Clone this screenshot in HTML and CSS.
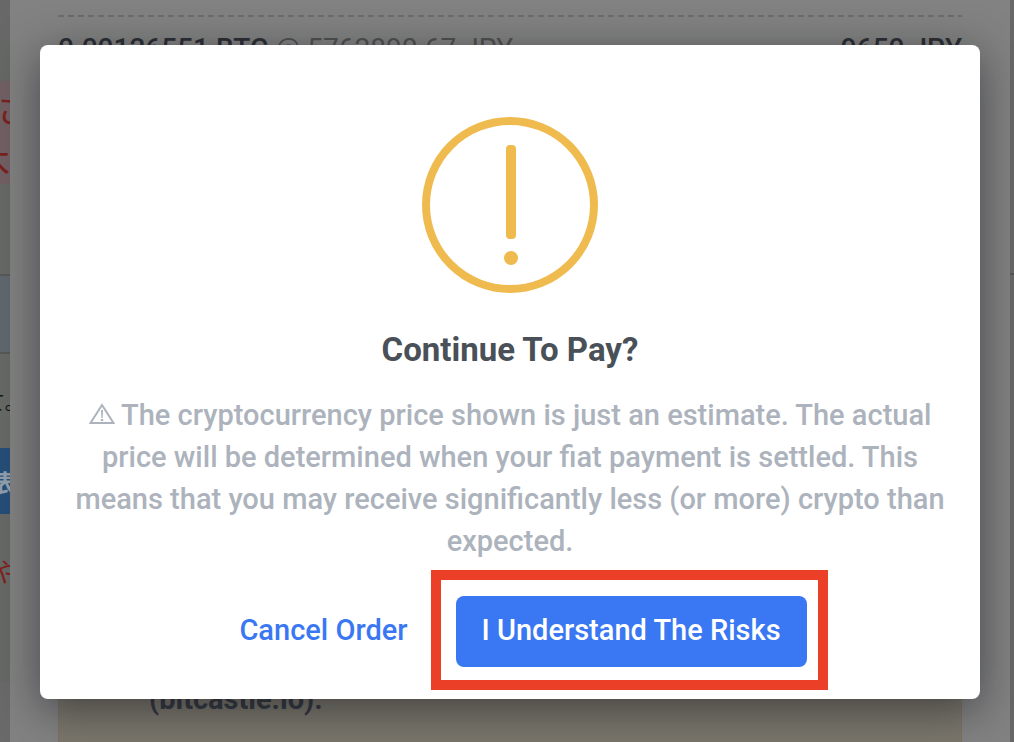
FILE: index.html
```
<!DOCTYPE html>
<html lang="en">
<head>
<meta charset="utf-8">
<meta name="viewport" content="width=device-width, initial-scale=1">
<title>Continue To Pay?</title>
<link rel="stylesheet" href="styles.css">
</head>
<body>
<div class="page" aria-hidden="true">
  <div class="rail" lang="ja">
    <div class="band band-top"></div>
    <div class="band band-gap"></div>
    <div class="band band-pink"><span class="from-start">さ</span><span>木</span></div>
    <div class="band band-plain"></div>
    <div class="band band-cool"></div>
    <div class="band band-note"><span>て。</span></div>
    <div class="band band-blue"><span>表</span></div>
    <div class="band band-red"><span>や</span></div>
    <div class="band band-end"></div>
  </div>
  <div class="sheet">
    <div class="order">
      <div class="amount"><b>0.00126551 BTC</b> <span>@ 5762890.67 JPY</span></div>
      <div class="total">9650 JPY</div>
    </div>
    <div class="notice">(bitcastle.io).</div>
  </div>
  <div class="rail rail-right"><div class="rule"></div></div>
</div>
<div class="overlay">
  <section class="modal" role="dialog" aria-modal="true" aria-labelledby="title" aria-describedby="message">
    <svg class="warning" viewBox="0 0 176 176" aria-hidden="true">
      <circle cx="88" cy="88" r="84" fill="none" stroke="#f0bb4e" stroke-width="8"/>
      <rect x="84" y="28" width="10" height="94" rx="4" fill="#f0bb4e"/>
      <circle cx="89" cy="141" r="7" fill="#f0bb4e"/>
    </svg>
    <h1 id="title" class="title">Continue To Pay?</h1>
    <p id="message" class="message"><svg class="mark" viewBox="0 0 26 22" aria-hidden="true"><path d="M13 2 24.500 20H1.500Z" fill="none" stroke="currentColor" stroke-width="2"/><path d="M12 7h2l-.4 8h-1.2Z" fill="currentColor"/><circle cx="13" cy="17" r="1.3" fill="currentColor"/></svg> The cryptocurrency price shown is just an estimate. The actual price will be determined when your fiat payment is settled. This means that you may receive significantly less (or more) crypto than expected.</p>
    <div class="actions">
      <button class="button" type="button">Cancel Order</button>
      <div class="highlight"><button class="button primary" type="button">I Understand The Risks</button></div>
    </div>
  </section>
</div>
</body>
</html>
```
FILE: styles.css
```
* { box-sizing: border-box; }
body {
  margin: 0;
  font-family: Roboto, "Noto Sans CJK JP", sans-serif;
  overflow: hidden;
}
.page {
  display: grid;
  grid-template-columns: 10px 1fr 4px;
  height: 100vh;
  background: #828282;
  overflow: hidden;
}
.rail { display: flex; flex-direction: column; overflow: hidden; background: #686a68; }
.band {
  flex: none;
  display: flex;
  flex-direction: column;
  align-items: flex-end;
  justify-content: center;
  overflow: hidden;
  white-space: nowrap;
  font-family: "Noto Sans CJK JP", sans-serif;
}
.band-top { height: 41px; background: #686868; }
.band-gap { height: 40px; background: #656865; }
.band-pink { height: 103px; background: #716063; color: #7a2020; font-size: 36px; line-height: 52px; }
.from-start { align-self: flex-start; text-indent: -4px; }
.band-plain { height: 90px; background: #666966; }
.band-cool { height: 80px; background: #60686f; border: solid #585858; border-width: 2px 0; }
.band-note { height: 94px; background: #666966; color: #111; font-size: 20px; align-items: center; }
.band-blue { height: 66px; background: #264e78; color: #909fac; font-size: 24px; font-weight: 700; align-items: center; }
.band-red { height: 169px; background: #666966; color: #822020; font-size: 26px; justify-content: flex-start; padding-top: 38px; align-items: center; }
.band-end { flex: 1; background: #6a6a6a; }
.rail-right { background: #686868; }
.rule { margin-top: 273px; border-top: 2px solid #555; }
.sheet { display: flex; flex-direction: column; justify-content: space-between; padding: 15px 48px 0; }
.order {
  display: flex;
  justify-content: space-between;
  padding-top: 18px;
  font-size: 28px;
  line-height: 32px;
  color: #2c2f34;
  background: repeating-linear-gradient(90deg, #6c6c6c 0 6px, transparent 6px 10px) top / 100% 2px no-repeat;
}
.amount b, .total { font-weight: 500; }
.amount span { color: #505050; }
.notice {
  height: 120px;
  padding: 61px 90px 0;
  font-size: 29px;
  line-height: 32px;
  font-weight: 700;
  color: #363a42;
  background: #7b776c;
  border: solid #7d7260;
  border-width: 0 1px;
}
.overlay { position: absolute; inset: 0; padding: 45px 34px 0 40px; }
.modal {
  padding: 72px 32px 32px;
  border-radius: 8px;
  background: #fff;
  box-shadow: 0 10px 44px rgba(10, 12, 20, .5);
  text-align: center;
}
.warning { display: block; width: 176px; margin: 0 auto; }
.title { margin: 36px 0 24px; font-size: 33px; line-height: 41px; font-weight: 700; color: #4a5057; }
.message { margin: 0; font-size: 29px; line-height: 42px; font-weight: 500; color: #acb3bc; }
.mark { width: 26px; height: 22px; }
.actions { display: flex; justify-content: center; gap: 22px; margin-top: 34px; }
.button {
  padding: 0 26px 4px;
  border: 0;
  border-radius: 8px;
  height: 71px;
  font: 500 29px/32px Roboto, sans-serif;
  color: #3a77f2;
  background: none;
  cursor: pointer;
}
.primary { color: #fff; background: #3a77f2; }
.highlight { position: relative; }
.highlight::after {
  content: "";
  position: absolute;
  inset: -26px -21px -23px -25px;
  border: 10px solid #ec3f27;
  pointer-events: none;
}
```
